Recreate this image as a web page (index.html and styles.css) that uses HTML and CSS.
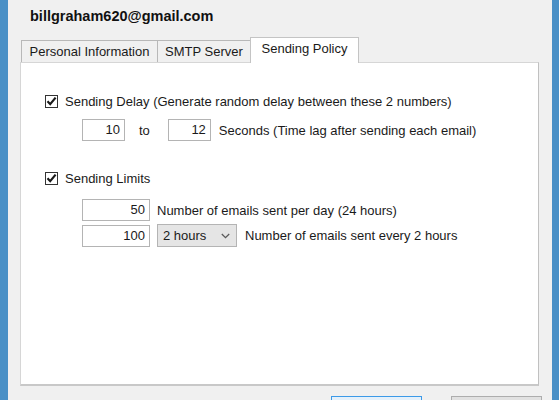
FILE: index.html
```html
<!DOCTYPE html>
<html>
<head>
<meta charset="utf-8">
<link rel="stylesheet" href="styles.css">
</head>
<body>
<div class="window">
  <div class="content">
    <div class="account">billgraham620@gmail.com</div>
    <div class="tabs">
      <div class="tab tab-personal">Personal Information</div>
      <div class="tab tab-smtp">SMTP Server</div>
      <div class="tab tab-policy active">Sending Policy</div>
    </div>
    <div class="panel">
      <div class="check-row">
        <span class="checkbox"><svg width="11" height="11" viewBox="0 0 11 11"><path d="M1.5 5.3 L4.2 8.2 L9.6 1.6" fill="none" stroke="#1a1a1a" stroke-width="2.2"/></svg></span>
        <span class="label">Sending Delay (Generate random delay between these 2 numbers)</span>
      </div>
      <div class="field-row row-delay">
        <div class="input w-small">10</div>
        <span class="to">to</span>
        <div class="input w-small">12</div>
        <span class="label">Seconds (Time lag after sending each email)</span>
      </div>
      <div class="check-row check-limits">
        <span class="checkbox"><svg width="11" height="11" viewBox="0 0 11 11"><path d="M1.5 5.3 L4.2 8.2 L9.6 1.6" fill="none" stroke="#1a1a1a" stroke-width="2.2"/></svg></span>
        <span class="label">Sending Limits</span>
      </div>
      <div class="field-row row-day">
        <div class="input w-wide">50</div>
        <span class="label">Number of emails sent per day (24 hours)</span>
      </div>
      <div class="field-row row-hours">
        <div class="input w-wide">100</div>
        <div class="select"><span>2 hours</span><svg width="9" height="6" viewBox="0 0 9 6"><path d="M0.8 1 L4.5 4.6 L8.2 1" fill="none" stroke="#5a5a5a" stroke-width="1.3"/></svg></div>
        <span class="label">Number of emails sent every 2 hours</span>
      </div>
    </div>
    <div class="buttons">
      <div class="btn btn-default"></div>
      <div class="btn"></div>
    </div>
  </div>
</div>
</body>
</html>
```
FILE: styles.css
```css
html, body {
  margin: 0;
  padding: 0;
}
body {
  width: 559px;
  height: 400px;
  overflow: hidden;
  background: #f0f0f0;
  font-family: "Liberation Sans", Arial, sans-serif;
  font-size: 13px;
  color: #1a1a1a;
}
.window {
  height: 400px;
  display: flex;
  border-left: 8px solid #4a90c6;
  border-right: 7px solid #4a90c6;
  box-sizing: border-box;
}
.content {
  flex: 1;
  display: flex;
  flex-direction: column;
}
.content > * {
  flex-shrink: 0;
}
.account {
  font-weight: bold;
  font-size: 14.5px;
  line-height: 17px;
  padding: 8px 0 0 22px;
  color: #111;
}
.tabs {
  display: flex;
  align-items: flex-end;
  margin: 12px 0 0 13px;
  height: 25px;
  position: relative;
  z-index: 2;
}
.tab {
  box-sizing: border-box;
  height: 22px;
  border: 1px solid #b8b8b8;
  border-bottom: none;
  background: #f0f0f0;
  text-align: center;
  line-height: 21px;
  color: #1a1a1a;
}
.tab-personal { width: 137px; }
.tab-smtp { width: 94px; margin-left: -1px; }
.tab-policy { width: 109px; margin-left: -1px; }
.tab.active {
  height: 26px;
  margin-bottom: -1px;
  background: #fff;
  border-color: #c4c4c4;
  line-height: 22px;
}
.panel {
  margin-left: 12px;
  width: 519px;
  height: 324px;
  box-sizing: border-box;
  background: #fff;
  border: 1px solid #d6d6d6;
  border-right-color: #c0c0c0;
  border-bottom: 2px solid #c8c8c8;
  padding: 30px 0 0 24px;
}
.check-row {
  display: flex;
  align-items: center;
  height: 16px;
}
.checkbox {
  box-sizing: border-box;
  width: 13px;
  height: 13px;
  border: 1px solid #333;
  background: #fff;
  display: flex;
  align-items: center;
  justify-content: center;
  margin-right: 7px;
}
.label {
  white-space: nowrap;
}
.field-row {
  display: flex;
  align-items: center;
  margin-left: 37px;
}
.row-delay { margin-top: 10px; }
.check-limits { margin-top: 29px; }
.row-day { margin-top: 13px; }
.row-hours { margin-top: 3px; }
.input {
  box-sizing: border-box;
  height: 22px;
  border: 1px solid #b4b4b4;
  background: #fff;
  text-align: right;
  padding-right: 4px;
  line-height: 20px;
}
.w-small { width: 43px; }
.w-wide { width: 68px; }
.to {
  margin: 0 18px 0 14px;
}
.row-delay .label { margin-left: 8px; }
.row-day .label { margin-left: 7px; }
.select {
  box-sizing: border-box;
  width: 80px;
  height: 23px;
  margin-left: 7px;
  border: 1px solid #b4b4b4;
  background: #e5e5e5;
  display: flex;
  align-items: center;
  justify-content: space-between;
  padding: 0 6px 0 5px;
}
.row-hours .label { margin-left: 8px; }
.buttons {
  display: flex;
  justify-content: flex-end;
  gap: 29px;
  padding-right: 10px;
  margin-top: 10px;
}
.btn {
  box-sizing: border-box;
  width: 91px;
  height: 23px;
  border: 1px solid #adadad;
  background: #e1e1e1;
}
.btn-default {
  border-color: #3c9ae8;
  background: #e5f1fb;
}
```
